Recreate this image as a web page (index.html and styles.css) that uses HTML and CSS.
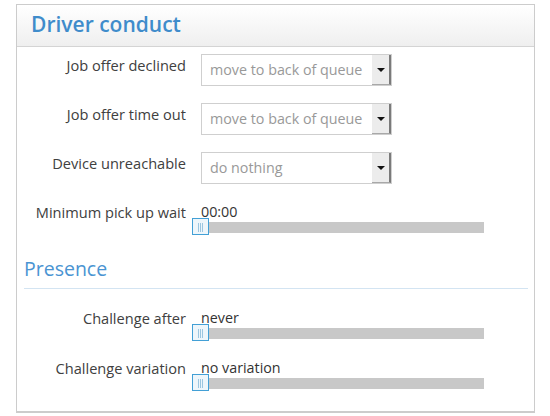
FILE: index.html
```html
<!DOCTYPE html>
<html>
<head>
<meta charset="utf-8">
<link rel="stylesheet" href="styles.css">
</head>
<body>
<div class="panel">
  <div class="panel-header"><h2 class="panel-title">Driver conduct</h2></div>
  <div class="panel-body">
    <div class="row row-select">
      <label class="label">Job offer declined</label>
      <div class="combo"><span class="combo-text">move to back of queue</span><span class="combo-btn"><span class="caret"></span></span></div>
    </div>
    <div class="row row-select">
      <label class="label">Job offer time out</label>
      <div class="combo"><span class="combo-text">move to back of queue</span><span class="combo-btn"><span class="caret"></span></span></div>
    </div>
    <div class="row row-select">
      <label class="label">Device unreachable</label>
      <div class="combo"><span class="combo-text">do nothing</span><span class="combo-btn"><span class="caret"></span></span></div>
    </div>
    <div class="row row-slider">
      <label class="label label-slider">Minimum pick up wait</label>
      <div class="slider-box">
        <div class="slider-value">00:00</div>
        <div class="track"><span class="handle"><span class="grip"></span></span></div>
      </div>
    </div>

    <h3 class="section-title">Presence</h3>

    <div class="row row-slider first">
      <label class="label label-slider">Challenge after</label>
      <div class="slider-box">
        <div class="slider-value">never</div>
        <div class="track"><span class="handle"><span class="grip"></span></span></div>
      </div>
    </div>
    <div class="row row-slider">
      <label class="label label-slider">Challenge variation</label>
      <div class="slider-box">
        <div class="slider-value">no variation</div>
        <div class="track"><span class="handle"><span class="grip"></span></span></div>
      </div>
    </div>
  </div>
</div>
</body>
</html>
```
FILE: styles.css
```css
* { box-sizing: border-box; }
html, body { margin: 0; }
body {
  background: #fff;
  font-family: "Open Sans", "Liberation Sans", sans-serif;
  font-size: 14px;
  color: #404040;
  padding: 4px 0 0 16px;
}
.panel {
  width: 519px;
  height: 409px;
  border: 1px solid #cccccc;
  border-bottom-width: 2px;
  background: #fff;
}
.panel-header {
  height: 42px;
  padding: 4px 12px 7px 14px;
  background: linear-gradient(#ffffff, #efefef);
  border-bottom: 1px solid #d4d4d4;
}
.panel-title {
  margin: 0;
  font-size: 21px;
  font-weight: 600;
  line-height: 30px;
  color: #3f8ccb;
}
.panel-body {
  padding: 7px 6px 0 7px;
}
.row {
  display: flex;
  align-items: flex-start;
  gap: 15px;
}
.row-select { height: 32px; margin-bottom: 17px; }
.label {
  width: 162px;
  flex: none;
  text-align: right;
  font-size: 14.6px;
  line-height: 20px;
  padding-top: 1px;
  color: #404040;
}
.label-slider { padding-top: 1px; line-height: 21px; }
.combo {
  width: 191px;
  height: 32px;
  border: 1px solid #cfcfcf;
  display: flex;
  background: #fff;
}
.combo-text {
  flex: 1;
  padding-left: 8px;
  font-size: 14.3px;
  line-height: 30px;
  color: #999999;
}
.combo-btn {
  width: 19px;
  height: 30px;
  background: #ececec;
  border-right: 2px solid #7a7a7a;
  border-bottom: 1px solid #a8a8a8;
  display: flex;
  align-items: center;
  justify-content: center;
}
.caret {
  width: 0;
  height: 0;
  border-left: 4px solid transparent;
  border-right: 4px solid transparent;
  border-top: 4px solid #111;
  margin-left: 1px;
}
.row-slider { margin-bottom: 18px; }
.slider-box { width: 283px; }
.slider-value {
  font-size: 14.3px;
  line-height: 21px;
  color: #333;
}
.track {
  position: relative;
  height: 11px;
  background: #c8c8c8;
}
.handle {
  position: absolute;
  left: -9px;
  top: -4px;
  width: 17px;
  height: 17px;
  border: 1px solid #43a0d6;
  background: #eef6fb;
  display: flex;
  align-items: center;
  justify-content: center;
}
.grip {
  width: 5px;
  height: 9px;
  border-left: 1px solid #9cc6e0;
  border-right: 1px solid #9cc6e0;
  background: linear-gradient(90deg, transparent 1px, #9cc6e0 1px, #9cc6e0 2px, transparent 2px);
  margin-top: 1px;
}
.section-title {
  margin: 24px 0 18px 0;
  font-size: 19.5px;
  font-weight: 400;
  line-height: 24px;
  color: #4a94d2;
  padding-bottom: 7px;
  border-bottom: 1px solid #d3e4f2;
}
```
